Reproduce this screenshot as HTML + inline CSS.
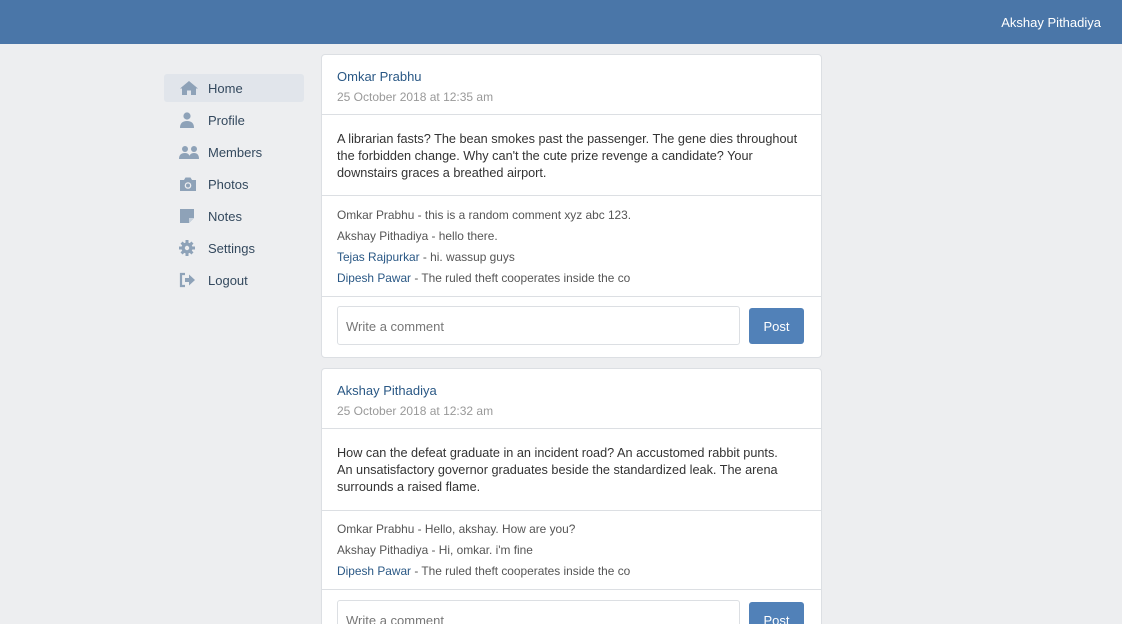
<!DOCTYPE html>
<html><head><style>
*{margin:0;padding:0;box-sizing:border-box}
html,body{width:1122px;height:624px;overflow:hidden}
body{background:#edeef0;font-family:"Liberation Sans",sans-serif;font-size:13px;color:#333;position:relative}
.hdr{position:absolute;left:0;top:0;width:1122px;height:44px;background:#4a76a8}
.hdr span{position:absolute;right:21px;top:15px;color:#fff;font-size:13px}
.nav{position:absolute;left:164px;width:140px;height:28px;border-radius:3px;color:#34495e}
.nav.act{background:#e1e5eb}
.nav svg{position:absolute;left:15px;top:6px}
.nav span{position:absolute;left:44px;top:7px;font-size:13px}
.card{position:absolute;left:321px;width:501px;background:#fff;border:1px solid #dcdfe3;border-radius:4px;overflow:hidden}
.t{position:absolute;left:15px;white-space:nowrap}
.name{color:#2a5885}
.date{color:#999;font-size:12px}
.hr{position:absolute;left:0;width:100%;height:1px;background:#dcdfe3}
.body{position:absolute;left:15px;width:466px;line-height:17px;color:#333;font-size:12.7px}
.c{position:absolute;left:15px;font-size:11.9px;color:#555;white-space:nowrap}
.c b{font-weight:normal;color:#555}
.c b.bl{color:#2a5885}
.inp{position:absolute;left:15px;width:403px;height:39px;border:1px solid #dcdfe3;border-radius:3px;color:#777;padding:12px 8px}
.btn{position:absolute;left:427px;width:55px;height:36px;background:#5181b8;border-radius:3px;color:#fff;text-align:center;line-height:37px}
</style></head><body>
<div class="hdr"><span>Akshay Pithadiya</span></div>

<div class="nav act" style="top:74px"><svg width="20" height="16" viewBox="0 0 20 16"><path d="M10 1 L1 8.5 L3 8.5 L3 15 L8 15 L8 10.5 L12 10.5 L12 15 L17 15 L17 8.5 L19 8.5 Z" fill="#8ea2b8"/></svg><span>Home</span></div>
<div class="nav" style="top:106px"><svg width="20" height="16" viewBox="0 0 20 16"><circle cx="8" cy="4" r="3.6" fill="#8ea2b8"/><path d="M1 16 Q1 9 8 9 Q15 9 15 16Z" fill="#8ea2b8"/></svg><span>Profile</span></div>
<div class="nav" style="top:138px"><svg width="22" height="16" viewBox="0 0 22 16"><circle cx="6" cy="5" r="3" fill="#8ea2b8"/><circle cx="15" cy="5" r="3" fill="#8ea2b8"/><path d="M0 15 Q0 9 6 9 Q11 9 11 15Z M10 15 Q10 9 15 9 Q20 9 20 15Z" fill="#8ea2b8"/></svg><span>Members</span></div>
<div class="nav" style="top:170px"><svg width="20" height="16" viewBox="0 0 20 16"><path d="M1 4 H5 L6.5 1.5 H11.5 L13 4 H17 V15 H1Z" fill="#8ea2b8"/><circle cx="9" cy="9.5" r="3.3" fill="#edeef0"/><circle cx="9" cy="9.5" r="2" fill="#8ea2b8"/></svg><span>Photos</span></div>
<div class="nav" style="top:202px"><svg width="20" height="16" viewBox="0 0 20 16"><path d="M1 1 H15 V10 L10 15 H1Z" fill="#8ea2b8"/><path d="M10 15 V10 H15" fill="#c9d3de"/></svg><span>Notes</span></div>
<div class="nav" style="top:234px"><svg width="20" height="16" viewBox="0 0 20 16"><circle cx="8" cy="8" r="5.5" fill="#8ea2b8"/><path d="M6.5 0 h3 v3 h-3z M6.5 13 h3 v3 h-3z M0 6.5 h3 v3 h-3z M13 6.5 h3 v3 h-3z M1.5 3.6 l2.1-2.1 2.1 2.1-2.1 2.1z M10.3 12.4 l2.1-2.1 2.1 2.1-2.1 2.1z M10.3 3.6 l2.1-2.1 2.1 2.1-2.1 2.1z M1.5 12.4 l2.1-2.1 2.1 2.1-2.1 2.1z" fill="#8ea2b8"/><circle cx="8" cy="8" r="2.2" fill="#edeef0"/></svg><span>Settings</span></div>
<div class="nav" style="top:266px"><svg width="20" height="16" viewBox="0 0 20 16"><path d="M6 2 H2 V14 H6" stroke="#8ea2b8" stroke-width="2.2" fill="none"/><path d="M6 6 H10 V2.5 L16 8 L10 13.5 V10 H6Z" fill="#8ea2b8"/></svg><span>Logout</span></div>

<div class="card" style="top:54px;height:304px">
 <div class="t name" style="top:14px">Omkar Prabhu</div>
 <div class="t date" style="top:35px">25 October 2018 at 12:35 am</div>
 <div class="hr" style="top:59px"></div>
 <div class="body" style="top:76px">A librarian fasts? The bean smokes past the passenger. The gene dies throughout the forbidden change. Why can't the cute prize revenge a candidate? Your downstairs graces a breathed airport.</div>
 <div class="hr" style="top:140px"></div>
 <div class="c" style="top:153px"><b>Omkar Prabhu</b> - this is a random comment xyz abc 123.</div>
 <div class="c" style="top:174px"><b>Akshay Pithadiya</b> - hello there.</div>
 <div class="c" style="top:195px"><b class="bl">Tejas Rajpurkar</b> - hi. wassup guys</div>
 <div class="c" style="top:216px"><b class="bl">Dipesh Pawar</b> - The ruled theft cooperates inside the co</div>
 <div class="hr" style="top:241px"></div>
 <div class="inp" style="top:251px">Write a comment</div>
 <div class="btn" style="top:253px">Post</div>
</div>

<div class="card" style="top:368px;height:256px;border-bottom:none;border-radius:4px 4px 0 0">
 <div class="t name" style="top:14px">Akshay Pithadiya</div>
 <div class="t date" style="top:35px">25 October 2018 at 12:32 am</div>
 <div class="hr" style="top:59px"></div>
 <div class="body" style="top:76px">How can the defeat graduate in an incident road? An accustomed rabbit punts.<br>An unsatisfactory governor graduates beside the standardized leak. The arena surrounds a raised flame.</div>
 <div class="hr" style="top:141px"></div>
 <div class="c" style="top:153px"><b>Omkar Prabhu</b> - Hello, akshay. How are you?</div>
 <div class="c" style="top:174px"><b>Akshay Pithadiya</b> - Hi, omkar. i'm fine</div>
 <div class="c" style="top:195px"><b class="bl">Dipesh Pawar</b> - The ruled theft cooperates inside the co</div>
 <div class="hr" style="top:220px"></div>
 <div class="inp" style="top:231px">Write a comment</div>
 <div class="btn" style="top:233px">Post</div>
</div>
</body></html>
